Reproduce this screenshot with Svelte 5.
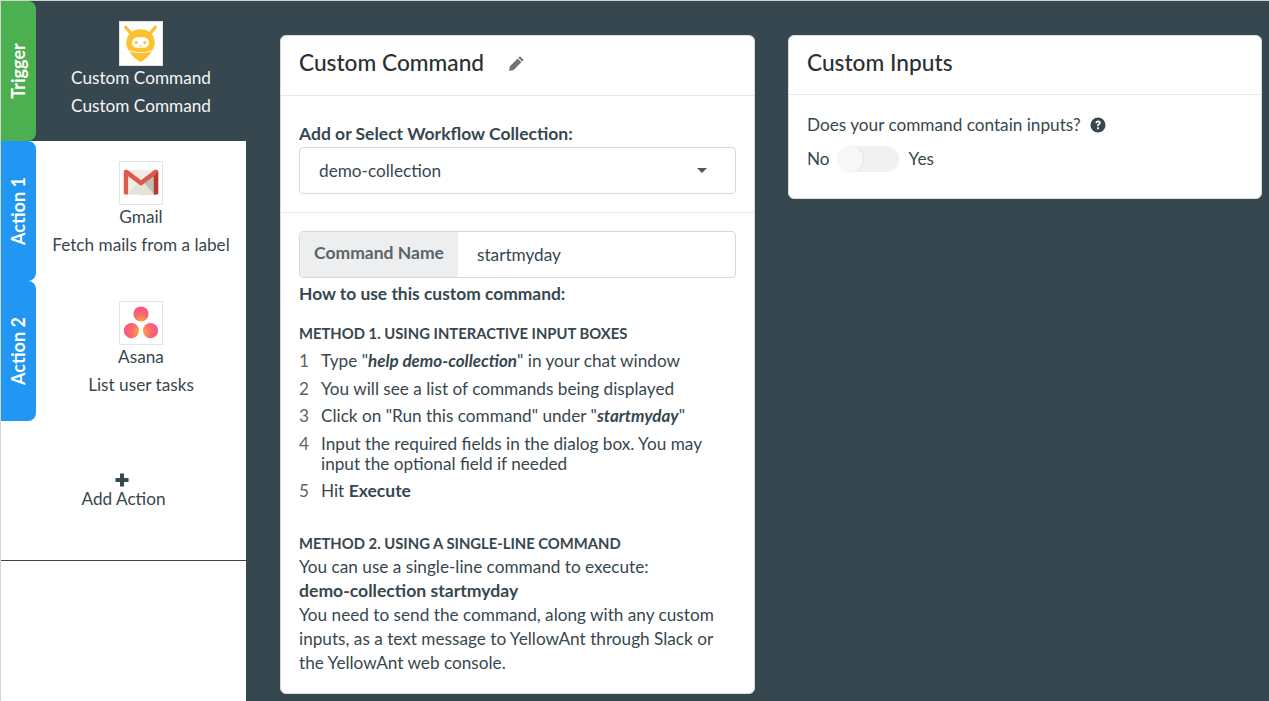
<script>
  const steps = [
    { n: 1, html: 'Type "<b><i>help demo-collection</i></b>" in your chat window' },
    { n: 2, html: 'You will see a list of commands being displayed' },
    { n: 3, html: 'Click on "Run this command" under "<b><i>startmyday</i></b>"' },
    { n: 4, html: 'Input the required fields in the dialog box. You may input the optional field if needed' },
    { n: 5, html: 'Hit <b>Execute</b>' }
  ];
</script>

<div class="page">
  <aside class="sidebar">
    <div class="step trigger">
      <div class="tab green"><span>Trigger</span></div>
      <div class="step-body">
        <div class="logo tall">
          <svg viewBox="0 0 44 44" width="42" height="43">
            <path d="M6 5l6 7M37 5l-6 7" stroke="#fdc02f" stroke-width="3.400" stroke-linecap="round" />
            <path d="M21.500 7c9 0 15 6.500 15 14.500 0 7-7.500 16-15 20C14 37.500 6.500 28.500 6.500 21.500 6.500 13.500 12.500 7 21.500 7z" fill="#fdc02f" />
            <path d="M8 28.500c4.500 4 22.500 4 27 0" fill="none" stroke="#fff" stroke-width="1" />
            <rect x="12.500" y="15.500" width="18" height="11" rx="5.500" fill="#fff" />
            <circle cx="17" cy="21" r="1.600" fill="#fdc02f" />
            <circle cx="26" cy="21" r="1.600" fill="#fdc02f" />
            <path d="M20 24.500h3" stroke="#fdc02f" stroke-width="1" />
          </svg>
        </div>
        <div class="line light">Custom Command</div>
        <div class="line light">Custom Command</div>
      </div>
    </div>

    <div class="step">
      <div class="tab blue"><span>Action 1</span></div>
      <div class="step-body">
        <div class="logo bordered">
          <svg viewBox="0 0 44 44" width="42" height="42">
            <rect x="4" y="8" width="36" height="26" rx="1.500" fill="#efeee6" />
            <path d="M22 24L36 12v22H22z" fill="#bdbfb6" />
            <path d="M8 34L19 21l3 3 3-2.500L36 34z" fill="#e4e3da" />
            <path d="M4 10C4 8 6.500 7.500 8 8.500L22 19 36 8.500C37.500 7.500 40 8 40 10V32.500c0 1-.7 1.500-1.500 1.500H35.500V15L22 25 8.500 15V34H5.500C4.700 34 4 33.500 4 32.500z" fill="#e2574c" />
            <path d="M35.500 15L40 10v22.500c0 1-.7 1.500-1.500 1.500h-3z" fill="#b8392f" />
          </svg>
        </div>
        <div class="line">Gmail</div>
        <div class="line">Fetch mails from a label</div>
      </div>
    </div>

    <div class="step">
      <div class="tab blue"><span>Action 2</span></div>
      <div class="step-body">
        <div class="logo bordered">
          <svg viewBox="0 0 44 44" width="42" height="42">
            <defs>
              <radialGradient id="asana-top" cx="0.5" cy="1" r="0.8">
                <stop offset="0" stop-color="#ffa83f" />
                <stop offset="0.6" stop-color="#fb6a6d" />
                <stop offset="1" stop-color="#f85a82" />
              </radialGradient>
              <radialGradient id="asana-left" cx="1" cy="0.6" r="0.9">
                <stop offset="0" stop-color="#ffa83f" />
                <stop offset="0.6" stop-color="#fb6a6d" />
                <stop offset="1" stop-color="#f85a82" />
              </radialGradient>
              <radialGradient id="asana-right" cx="0" cy="0.6" r="0.9">
                <stop offset="0" stop-color="#ffa83f" />
                <stop offset="0.6" stop-color="#fb6a6d" />
                <stop offset="1" stop-color="#f85a82" />
              </radialGradient>
            </defs>
            <circle cx="22" cy="12.500" r="7.900" fill="url(#asana-top)" />
            <circle cx="12" cy="30" r="7.900" fill="url(#asana-left)" />
            <circle cx="32" cy="30" r="7.900" fill="url(#asana-right)" />
          </svg>
        </div>
        <div class="line">Asana</div>
        <div class="line">List user tasks</div>
      </div>
    </div>

    <div class="add">
      <svg viewBox="0 0 14 14" width="14" height="14"><path d="M5 0.500h4V5h4.500v4H9v4.500H5V9H0.500V5H5z" fill="#37474f" /></svg>
      <div>Add Action</div>
    </div>
  </aside>

  <main class="main">
    <section class="card left">
      <header class="card-head">
        <h2>Custom Command</h2>
        <svg class="pencil" viewBox="0 0 16 16" width="17" height="17">
          <path d="M11.300 1.200l3.500 3.500-1.500 1.500-3.500-3.500zM9.100 3.400l3.500 3.500-7.300 7.300-4.400.9.900-4.400z" fill="#6f7478" />
        </svg>
      </header>

      <div class="block">
        <label class="label" for="coll">Add or Select Workflow Collection:</label>
        <div class="select" id="coll">
          <span>demo-collection</span>
          <i class="caret"></i>
        </div>
      </div>

      <div class="block second">
        <div class="input-group">
          <div class="addon">Command Name</div>
          <div class="value">startmyday</div>
        </div>
        <h4>How to use this custom command:</h4>
        <h5 class="m1">METHOD 1. USING INTERACTIVE INPUT BOXES</h5>
        <ol>
          {#each steps as s}
            <li><span class="num">{s.n}</span><span class="txt">{@html s.html}</span></li>
          {/each}
        </ol>
        <h5 class="m2">METHOD 2. USING A SINGLE-LINE COMMAND</h5>
        <p>You can use a single-line command to execute:</p>
        <p class="cmd">demo-collection startmyday</p>
        <p>You need to send the command, along with any custom inputs, as a text message to YellowAnt through Slack or the YellowAnt web console.</p>
      </div>
    </section>

    <section class="card right">
      <header class="card-head">
        <h2>Custom Inputs</h2>
      </header>
      <div class="inputs">
        <div class="question">
          Does your command contain inputs?
          <svg viewBox="0 0 16 16" width="16" height="16">
            <circle cx="8" cy="8" r="7.500" fill="#37474f" />
            <path d="M5.400 6.100c.1-1.600 1.200-2.500 2.700-2.500s2.700.9 2.700 2.200c0 1.100-.7 1.600-1.400 2-.5.3-.7.500-.7 1V9.300H7.100V8.600c0-.9.500-1.400 1.100-1.800.5-.3.800-.5.800-.9s-.4-.7-.9-.7c-.6 0-1 .4-1.100 1z" fill="#fff" />
            <rect x="7.100" y="10.300" width="1.800" height="1.900" rx=".3" fill="#fff" />
          </svg>
        </div>
        <div class="toggle-row">
          <span>No</span>
          <span class="toggle"><span class="knob"></span></span>
          <span>Yes</span>
        </div>
      </div>
    </section>
  </main>
</div>

<style>
  :global(body) {
    margin: 0;
    background: #37474f;
  }

  .page {
    display: flex;
    height: 701px;
    overflow: hidden;
    background: #37474f;
    font-family: Lato, "Liberation Sans", sans-serif;
    font-size: 17.200px;
    color: #37474f;
    border-top: 1px solid #cfd3d5;
    box-sizing: border-box;
  }

  .sidebar {
    width: 245px;
    margin-left: 1px;
    background: #fff;
    flex-shrink: 0;
    box-shadow: -1px 0 0 #d4d4d4;
  }

  .step {
    display: flex;
    height: 140px;
  }

  .trigger {
    background: #37474f;
  }

  .tab {
    width: 35px;
    flex-shrink: 0;
    border-radius: 0 8px 8px 0;
    display: flex;
    align-items: center;
    justify-content: center;
    color: #fff;
    font-weight: 700;
    font-size: 18px;
    padding-right: 2px;
    padding-bottom: 1px;
    box-sizing: border-box;
  }

  .tab span {
    transform: rotate(-90deg);
    white-space: nowrap;
    display: block;
  }

  .green { background: #4caf50; }
  .blue { background: #2196f3; }

  .step-body {
    flex: 1;
    display: flex;
    flex-direction: column;
    align-items: center;
    padding-top: 20px;
    text-align: center;
  }

  .logo {
    width: 44px;
    height: 44px;
    box-sizing: border-box;
    background: #fff;
    border: 1px solid #e4e4e4;
    line-height: 0;
    margin-bottom: -2px;
  }

  .logo.tall {
    height: 45px;
  }

  .line {
    line-height: 28px;
    white-space: nowrap;
    height: 28px;
  }

  .light {
    color: #f4f5f5;
  }

  .add {
    display: flex;
    flex-direction: column;
    align-items: center;
    height: 140px;
    padding-top: 52px;
    box-sizing: border-box;
    line-height: 20px;
    border-bottom: 1px solid #37474f;
  }

  .add svg {
    margin-bottom: 2px;
    margin-right: 3px;
  }

  .main {
    flex: 1;
    display: flex;
    align-items: flex-start;
    gap: 33px;
    padding: 34px 7px 0 34px;
  }

  .card {
    background: #fff;
    border-radius: 6px;
    border: 1px solid #d9dcdd;
    box-sizing: border-box;
    width: 475px;
  }

  .left { height: 659px; }
  .right { height: 164px; width: 474px; }

  .card-head {
    display: flex;
    align-items: center;
    padding: 0 18px 7px;
    box-sizing: border-box;
    height: 60px;
    border-bottom: 1px solid #e6e8e9;
  }

  .right .card-head {
    height: 59px;
    padding-bottom: 6px;
  }

  h2 {
    margin: 0;
    font-size: 22.700px;
    font-weight: 500;
    color: #2b2f31;
  }

  .pencil {
    margin-left: 24px;
    margin-top: 2px;
  }

  .block {
    padding: 27px 18px 18px;
    border-bottom: 1px solid #e6e8e9;
  }

  .label {
    display: block;
    font-weight: 700;
    font-size: 17.500px;
    line-height: 22px;
    margin-bottom: 2px;
  }

  .select {
    height: 47px;
    box-sizing: border-box;
    border: 1px solid #d6d9da;
    border-radius: 4px;
    padding: 0 28px 0 19px;
    display: flex;
    align-items: center;
    justify-content: space-between;
  }

  .caret {
    border: 5px solid transparent;
    border-top-color: #555;
    border-bottom-width: 0;
  }

  .second {
    padding: 18px 18px 0;
    border-bottom: none;
  }

  .input-group {
    display: flex;
    height: 47px;
    border: 1px solid #d6d9da;
    border-radius: 4px;
    box-sizing: border-box;
    overflow: hidden;
  }

  .addon {
    width: 158px;
    background: #eceeef;
    color: #5b6468;
    font-weight: 700;
    display: flex;
    align-items: center;
    justify-content: center;
    box-sizing: border-box;
    font-size: 17.500px;
    padding-bottom: 4px;
  }

  .value {
    padding-left: 19px;
    display: flex;
    align-items: center;
  }

  h4 {
    margin: 5px 0 0;
    font-size: 17.400px;
    line-height: 22px;
    font-weight: 700;
  }

  h5 {
    margin: 0;
    font-size: 14.800px;
    font-weight: 700;
    line-height: 20px;
  }

  .m1 { margin-top: 18px; }
  .m2 { margin-top: 32px; margin-bottom: 2px; }

  ol {
    list-style: none;
    margin: 8px 0 0;
    padding: 0;
  }

  li {
    display: flex;
    line-height: 20px;
    margin-bottom: 7.500px;
  }

  .num {
    width: 22px;
    flex-shrink: 0;
    color: #5b6468;
  }

  .txt {
    flex: 1;
  }

  .txt :global(b) {
    font-size: 17.500px;
  }

  .txt :global(b i) {
    font-size: 17px;
  }

  p {
    margin: 0;
    line-height: 24px;
  }

  .cmd {
    font-weight: 700;
    font-size: 17.600px;
  }

  .inputs {
    padding: 18px;
  }

  .question {
    display: flex;
    align-items: center;
    gap: 9px;
    line-height: 24px;
  }

  .toggle-row {
    display: flex;
    align-items: center;
    gap: 8px;
    margin-top: 9px;
    line-height: 26px;
  }

  .toggle {
    width: 62px;
    height: 26px;
    border-radius: 13px;
    background: #f1f1f1;
    display: block;
    margin-left: -1px;
    margin-right: 2px;
  }

  .knob {
    display: block;
    width: 26px;
    height: 26px;
    border-radius: 50%;
    background: #f8f8f8;
    box-shadow: 1px 0 2px rgba(0, 0, 0, 0.06);
  }
</style>
